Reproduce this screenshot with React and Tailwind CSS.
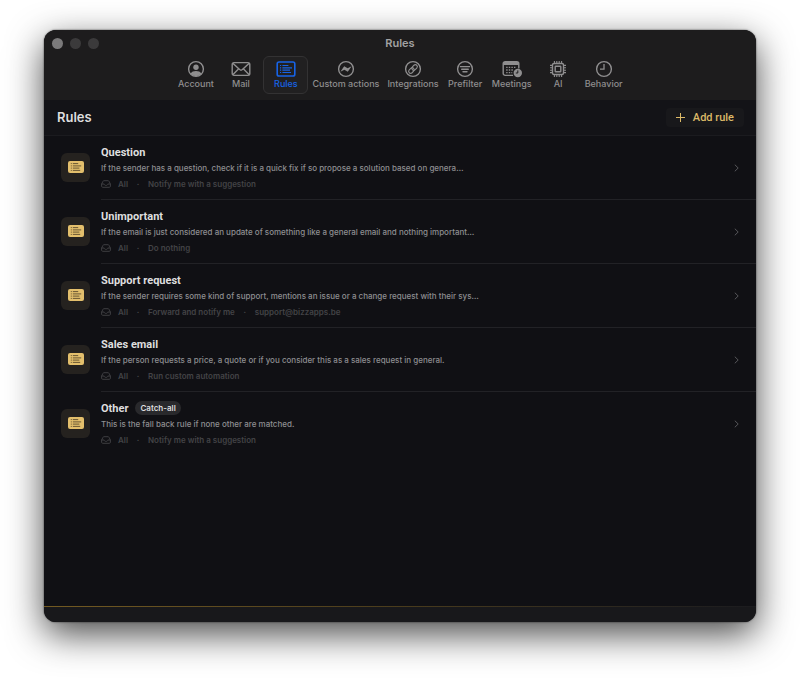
const AccountIcon = () => (
  <svg viewBox="0 0 18 18" className="size-[18px]" fill="none" stroke="currentColor" strokeWidth="1.4">
    <circle cx="9" cy="9" r="7.4" />
    <circle cx="9" cy="7.2" r="2.7" fill="currentColor" stroke="none" />
    <path d="M3.6 13.6c1-2 3-2.7 5.4-2.7s4.4.7 5.4 2.7A7.4 7.4 0 0 1 9 16.2a7.4 7.4 0 0 1-5.4-2.6z" fill="currentColor" stroke="none" />
  </svg>
);

const MailIcon = () => (
  <svg viewBox="0 0 20 18" className="h-[18px] w-5" fill="none" stroke="currentColor" strokeWidth="1.4">
    <rect x="1.2" y="2.6" width="17.6" height="12.8" rx="1.8" />
    <path d="M1.8 3.2 8.6 9.6c.9.8 1.9.8 2.8 0l6.8-6.4M1.8 14.8l5.9-6M18.2 14.8l-5.9-6" />
  </svg>
);

const RulesIcon = () => (
  <svg viewBox="0 0 20 18" className="h-[18px] w-5" fill="none" stroke="currentColor" strokeWidth="1.6">
    <rect x="1.2" y="2" width="17.6" height="14" rx="1.8" />
    <path
      d="M4 5.5h1.2M4 7.8h1.2M4 10.2h1.2M4 12.5h1.2M6.4 5.5h6M6.4 7.8h9.6M6.4 10.2h7.6M6.4 12.5h8.6"
      strokeWidth="1.2"
    />
  </svg>
);

const ActionsIcon = () => (
  <svg viewBox="0 0 18 18" className="size-[18px]" fill="none" stroke="currentColor" strokeWidth="1.4">
    <circle cx="9" cy="9" r="7.4" />
    <path d="M3.4 11.8 7.2 6.3l3.4 2 4-2.1-3.8 5.5-3.4-2z" fill="currentColor" stroke="none" />
  </svg>
);

const IntegrationsIcon = () => (
  <svg viewBox="0 0 18 18" className="size-[18px]" fill="none" stroke="currentColor" strokeWidth="1.4">
    <circle cx="9" cy="9" r="7.4" />
    <g transform="rotate(-45 9 9)" strokeWidth="1.1">
      <rect x="3.7" y="7" width="6.2" height="4" rx="2" />
      <rect x="8.1" y="7" width="6.2" height="4" rx="2" />
    </g>
  </svg>
);

const PrefilterIcon = () => (
  <svg viewBox="0 0 18 18" className="size-[18px]" fill="none" stroke="currentColor" strokeWidth="1.4">
    <circle cx="9" cy="9" r="7.4" />
    <path d="M4.4 6.6h9.2M5.7 9.2h6.6M7 11.8h4" strokeLinecap="round" />
  </svg>
);

const MeetingsIcon = () => (
  <svg viewBox="0 0 20 18" className="h-[18px] w-5" fill="none" stroke="currentColor">
    <path d="M11 15.4H3.2a2 2 0 0 1-2-2V3.6a2 2 0 0 1 2-2h11.6a2 2 0 0 1 2 2v4.8" strokeWidth="1.4" />
    <path d="M1.2 3.4h15.6" strokeWidth="3" />
    <path d="M4.2 7.4h9.8M4.2 10h7.6M4.2 12.6h6" strokeWidth="1.4" strokeDasharray="1.4 1.2" />
    <circle cx="15.8" cy="13" r="4.2" fill="currentColor" stroke="none" />
    <path d="M15.8 10.4V13h-2" stroke="#1d1c1d" strokeWidth="1" />
  </svg>
);

const ChipIcon = () => (
  <svg viewBox="0 0 18 18" className="size-[18px]" fill="none" stroke="currentColor" strokeWidth="1.4">
    <rect x="3.5" y="3.5" width="11" height="11" rx="1.5" />
    <rect x="6.2" y="6.2" width="5.6" height="5.6" rx="0.5" />
    <path
      d="M5.4 1v2.5M7.8 1v2.5M10.2 1v2.5M12.6 1v2.5M5.4 14.5V17M7.8 14.5V17M10.2 14.5V17M12.6 14.5V17M1 5.4h2.5M1 7.8h2.5M1 10.2h2.5M1 12.6h2.5M14.5 5.4H17M14.5 7.8H17M14.5 10.2H17M14.5 12.6H17"
      strokeWidth="1.1"
    />
  </svg>
);

const ClockIcon = () => (
  <svg viewBox="0 0 18 18" className="size-[18px]" fill="none" stroke="currentColor" strokeWidth="1.4">
    <circle cx="9" cy="9" r="7.4" />
    <path d="M9 4v5.2H5" strokeWidth="1.3" />
  </svg>
);

const RuleBadge = () => (
  <svg viewBox="0 0 16 12" className="h-3 w-4">
    <rect width="16" height="12" rx="2" fill="#e3bf6c" />
    <path
      d="M2.8 2.6h1M2.8 4.9h1M2.8 7.1h1M2.8 9.4h1M4.8 2.6h5.4M4.8 4.9h8.4M4.8 7.1h6.6M4.8 9.4h7.4"
      stroke="#5a4b2c"
      strokeWidth="0.9"
    />
  </svg>
);

const TrayIcon = () => (
  <svg viewBox="0 0 10 8" className="h-2 w-2.5" fill="none" stroke="currentColor" strokeWidth="0.9">
    <path d="M.6 4 2 1.3Q2.3.7 3 .7h4q.7 0 1 .6L9.4 4v2.2a1.1 1.1 0 0 1-1.1 1.1H1.7A1.1 1.1 0 0 1 .6 6.200zM.6 4h2.6c0 1 .8 1.4 1.8 1.4S6.8 5 6.8 4h2.6" />
  </svg>
);

const tabs = [
  { label: "Account", Icon: AccountIcon },
  { label: "Mail", Icon: MailIcon },
  { label: "Rules", Icon: RulesIcon, active: true },
  { label: "Custom actions", Icon: ActionsIcon },
  { label: "Integrations", Icon: IntegrationsIcon },
  { label: "Prefilter", Icon: PrefilterIcon },
  { label: "Meetings", Icon: MeetingsIcon },
  { label: "AI", Icon: ChipIcon },
  { label: "Behavior", Icon: ClockIcon },
];

const rules = [
  {
    name: "Question",
    text: "If the sender has a question, check if it is a quick fix if so propose a solution based on genera…",
    meta: ["All", "Notify me with a suggestion"],
  },
  {
    name: "Unimportant",
    text: "If the email is just considered an update of something like a general email and nothing important…",
    meta: ["All", "Do nothing"],
  },
  {
    name: "Support request",
    text: "If the sender requires some kind of support, mentions an issue or a change request with their sys…",
    meta: ["All", "Forward and notify me", "support@bizzapps.be"],
  },
  {
    name: "Sales email",
    text: "If the person requests a price, a quote or if you consider this as a sales request in general.",
    meta: ["All", "Run custom automation"],
  },
  {
    name: "Other",
    tag: "Catch-all",
    text: "This is the fall back rule if none other are matched.",
    meta: ["All", "Notify me with a suggestion"],
  },
];

const Toolbar = () => (
  <header className="bg-[#1d1c1d] h-[70px] shrink-0">
    <div className="grid grid-cols-[1fr_auto_1fr] items-center h-[26px] px-2">
      <div className="flex gap-[7px]">
        <span className="size-[11px] rounded-full bg-[#7b7a7b]" />
        <span className="size-[11px] rounded-full bg-[#3b3a3b]" />
        <span className="size-[11px] rounded-full bg-[#3b3a3b]" />
      </div>
      <h1 className="text-[11px] font-semibold text-[#a3a2a3]">Rules</h1>
    </div>
    <nav className="flex justify-center">
      {tabs.map(({ label, Icon, active }) => (
        <button
          key={label}
          className={
            active
              ? "flex flex-col items-center min-w-[45px] h-[38px] px-[3px] pt-[3px] rounded-md border border-[#333233] bg-[#212021] text-[#1763e6]"
              : "flex flex-col items-center min-w-[45px] h-[38px] px-[3px] pt-[3px] rounded-md border border-transparent text-[#8f8e8f]"
          }
        >
          <Icon />
          <span className="text-[9px] leading-3 font-medium whitespace-nowrap">{label}</span>
        </button>
      ))}
    </nav>
  </header>
);

const RuleRow = ({ rule, last }) => (
  <li className="flex items-center gap-[11px] pl-[17px]">
    <span className="flex items-center justify-center size-[29px] mb-0.5 rounded-md bg-[#25221f]">
      <RuleBadge />
    </span>
    <button
      className={
        last
          ? "flex flex-1 items-center justify-between h-16 pr-[17px] text-left"
          : "flex flex-1 items-center justify-between h-16 pr-[17px] text-left border-b border-[#222226]"
      }
    >
      <span className="flex flex-col">
        <span className="flex items-center gap-[7px] h-4 text-[#dededf]">
          <span className="pt-0.5 text-[11px] leading-4 font-bold font-['Roboto',sans-serif]">{rule.name}</span>
          {rule.tag && (
            <span className="rounded-full bg-[#29292c] px-[5px] text-[8px] leading-[14px] font-semibold">{rule.tag}</span>
          )}
        </span>
        <span className="text-[8px] leading-4 font-medium text-[#8e8e91]">{rule.text}</span>
        <span className="flex items-center text-[8px] leading-4 font-semibold text-[#434346]">
          <TrayIcon />
          {rule.meta.map((item, i) => (
            <span key={item} className="flex">
              {i > 0 && <span className="w-5 text-center">·</span>}
              <span className={i === 0 ? "ml-[7px]" : ""}>{item}</span>
            </span>
          ))}
        </span>
      </span>
      <svg viewBox="0 0 5 8" className="h-2 w-[5px]" fill="none" stroke="#57575b">
        <path d="M.8.7 4.2 4 .8 7.3" />
      </svg>
    </button>
  </li>
);

export default function App() {
  return (
    <div className="min-h-screen bg-white flex flex-col px-11 pt-[30px] pb-[59px] font-['Inter',sans-serif]">
      <div className="flex-1 flex flex-col rounded-xl overflow-hidden bg-[#101014] shadow-[0_0_2px_rgba(0,0,0,0.7),0_12px_36px_rgba(0,0,0,0.72)]">
        <Toolbar />
        <div className="flex items-center justify-between h-[36px] shrink-0 bg-[#131317] border-b border-[#1b1b1f] pl-[13px] pr-3">
          <h2 className="text-[13px] font-semibold text-[#dededf]">Rules</h2>
          <button className="flex items-center gap-2 h-[19px] px-2.5 rounded bg-[#18181b] text-[11px] font-medium text-[#dcb968] font-['Roboto',sans-serif]">
            <svg viewBox="0 0 9 9" className="size-[9px]" stroke="currentColor">
              <path d="M4.5 0v9M0 4.5h9" />
            </svg>
            <span className="pt-0.5">Add rule</span>
          </button>
        </div>
        <ul className="flex-1">
          {rules.map((rule, i) => (
            <RuleRow key={rule.name} rule={rule} last={i === rules.length - 1} />
          ))}
        </ul>
        <footer className="bg-[#18181b]">
          <div className="h-px bg-linear-to-r from-[#735a22] via-[#4a3c1c] to-[#1b1b1e]" />
          <div className="h-[15px]" />
        </footer>
      </div>
    </div>
  );
}
